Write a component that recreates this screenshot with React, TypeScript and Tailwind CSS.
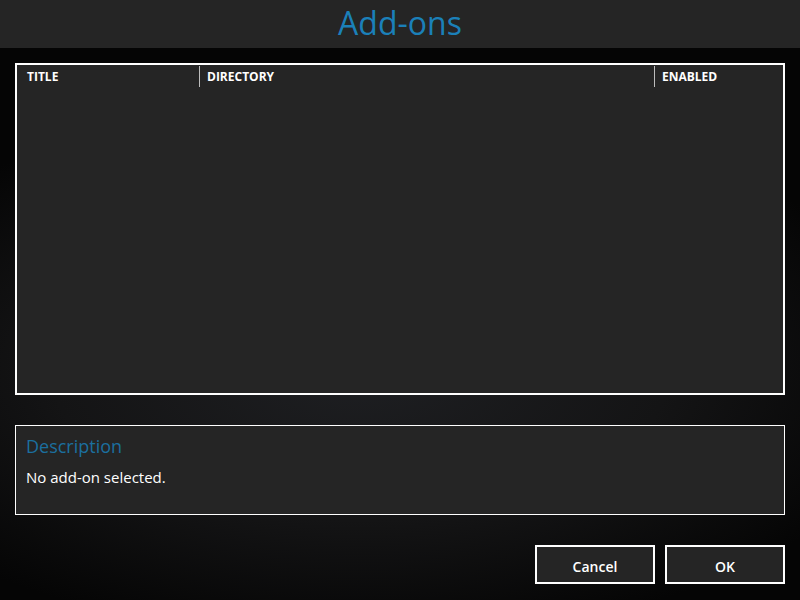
import React from "react";

const font = { fontFamily: '"Segoe UI", "Open Sans", "Noto Sans", sans-serif' };

export default function App() {
  return (
    <div
      className="w-[800px] h-[600px] flex flex-col text-white overflow-hidden"
      style={{
        ...font,
        background:
          "radial-gradient(ellipse 70% 45% at 45% 62%, #1e1f22 0%, #141415 55%, #050505 100%)",
      }}
    >
      <div className="h-[48px] bg-[#252525] flex items-center justify-center shrink-0">
        <span className="text-[32px] leading-none text-[#1b80b9] -mt-[2px]">Add-ons</span>
      </div>
      <div className="flex flex-col px-[15px] pt-[15px]">
        <div className="h-[332px] border-2 border-white bg-[#252525] flex flex-col">
          <div className="flex h-[22px] items-stretch pt-[1px] text-[12px] font-bold uppercase">
            <div className="w-[182px] pl-[10px] flex items-center">Title</div>
            <div className="w-px bg-[#bdbdbd]" />
            <div className="w-[454px] pl-[7px] flex items-center">Directory</div>
            <div className="w-px bg-[#bdbdbd]" />
            <div className="flex-1 pl-[7px] flex items-center">Enabled</div>
          </div>
        </div>
        <div className="mt-[30px] h-[90px] border border-white bg-[#252525] px-[10px] pt-[8px]">
          <div className="text-[18px] leading-[24px] text-[#1b6f9f]">Description</div>
          <div className="text-[15px] leading-[20px] mt-[9px]">No add-on selected.</div>
        </div>
        <div className="mt-[30px] flex justify-end gap-[10px]">
          <button className="w-[120px] h-[39px] border-2 border-white bg-[#252525] text-[14px] font-semibold pt-[3px]">
            Cancel
          </button>
          <button className="w-[120px] h-[39px] border-2 border-white bg-[#252525] text-[14px] font-semibold pt-[3px]">
            OK
          </button>
        </div>
      </div>
    </div>
  );
}
